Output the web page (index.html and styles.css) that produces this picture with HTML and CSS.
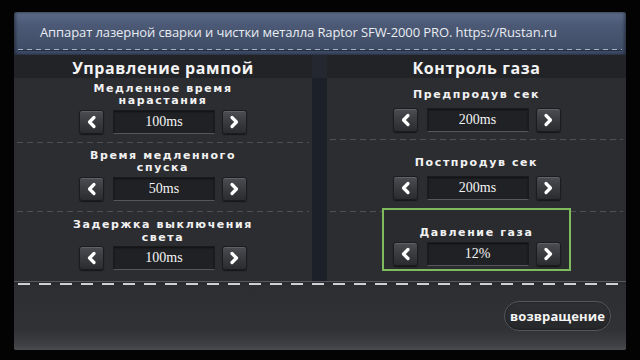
FILE: index.html
```html
<!DOCTYPE html>
<html lang="ru">
<head>
<meta charset="utf-8">
<title>Raptor SFW-2000 PRO</title>
<link rel="stylesheet" href="styles.css">
</head>
<body>
<div class="screen">
  <header class="header">
    <div class="header-title">Аппарат лазерной сварки и чистки металла Raptor SFW-2000 PRO. https://Rustan.ru</div>
    <div class="header-stitch"></div>
  </header>
  <main class="main">
    <section class="col col-left">
      <h2 class="col-title">Управление рампой</h2>
      <div class="panel">
        <div class="item">
          <div class="label">Медленное время<br>нарастания</div>
          <div class="spinner">
            <button class="btn"><svg width="11" height="14" viewBox="0 0 11 14"><polyline points="8,2.5 3.5,7 8,11.5" fill="none" stroke="#fff" stroke-width="3.2" stroke-linecap="round" stroke-linejoin="round"/></svg></button>
            <div class="value">100ms</div>
            <button class="btn"><svg width="11" height="14" viewBox="0 0 11 14"><polyline points="3,2.5 7.5,7 3,11.5" fill="none" stroke="#fff" stroke-width="3.2" stroke-linecap="round" stroke-linejoin="round"/></svg></button>
          </div>
        </div>
        <div class="sep"></div>
        <div class="item">
          <div class="label">Время медленного<br>спуска</div>
          <div class="spinner">
            <button class="btn"><svg width="11" height="14" viewBox="0 0 11 14"><polyline points="8,2.5 3.5,7 8,11.5" fill="none" stroke="#fff" stroke-width="3.2" stroke-linecap="round" stroke-linejoin="round"/></svg></button>
            <div class="value">50ms</div>
            <button class="btn"><svg width="11" height="14" viewBox="0 0 11 14"><polyline points="3,2.5 7.5,7 3,11.5" fill="none" stroke="#fff" stroke-width="3.2" stroke-linecap="round" stroke-linejoin="round"/></svg></button>
          </div>
        </div>
        <div class="sep"></div>
        <div class="item">
          <div class="label">Задержка выключения<br>света</div>
          <div class="spinner">
            <button class="btn"><svg width="11" height="14" viewBox="0 0 11 14"><polyline points="8,2.5 3.5,7 8,11.5" fill="none" stroke="#fff" stroke-width="3.2" stroke-linecap="round" stroke-linejoin="round"/></svg></button>
            <div class="value">100ms</div>
            <button class="btn"><svg width="11" height="14" viewBox="0 0 11 14"><polyline points="3,2.5 7.5,7 3,11.5" fill="none" stroke="#fff" stroke-width="3.2" stroke-linecap="round" stroke-linejoin="round"/></svg></button>
          </div>
        </div>
      </div>
    </section>
    <div class="divider"></div>
    <section class="col col-right">
      <h2 class="col-title">Контроль газа</h2>
      <div class="panel">
        <div class="item">
          <div class="label">Предпродув сек</div>
          <div class="spinner">
            <button class="btn"><svg width="11" height="14" viewBox="0 0 11 14"><polyline points="8,2.5 3.5,7 8,11.5" fill="none" stroke="#fff" stroke-width="3.2" stroke-linecap="round" stroke-linejoin="round"/></svg></button>
            <div class="value">200ms</div>
            <button class="btn"><svg width="11" height="14" viewBox="0 0 11 14"><polyline points="3,2.5 7.5,7 3,11.5" fill="none" stroke="#fff" stroke-width="3.2" stroke-linecap="round" stroke-linejoin="round"/></svg></button>
          </div>
        </div>
        <div class="sep"></div>
        <div class="item">
          <div class="label">Постпродув сек</div>
          <div class="spinner">
            <button class="btn"><svg width="11" height="14" viewBox="0 0 11 14"><polyline points="8,2.5 3.5,7 8,11.5" fill="none" stroke="#fff" stroke-width="3.2" stroke-linecap="round" stroke-linejoin="round"/></svg></button>
            <div class="value">200ms</div>
            <button class="btn"><svg width="11" height="14" viewBox="0 0 11 14"><polyline points="3,2.5 7.5,7 3,11.5" fill="none" stroke="#fff" stroke-width="3.2" stroke-linecap="round" stroke-linejoin="round"/></svg></button>
          </div>
        </div>
        <div class="sep"></div>
        <div class="item item-focus">
          <div class="focus-box">
            <div class="label">Давление газа</div>
            <div class="spinner">
              <button class="btn"><svg width="11" height="14" viewBox="0 0 11 14"><polyline points="8,2.5 3.5,7 8,11.5" fill="none" stroke="#fff" stroke-width="3.2" stroke-linecap="round" stroke-linejoin="round"/></svg></button>
              <div class="value">12%</div>
              <button class="btn"><svg width="11" height="14" viewBox="0 0 11 14"><polyline points="3,2.5 7.5,7 3,11.5" fill="none" stroke="#fff" stroke-width="3.2" stroke-linecap="round" stroke-linejoin="round"/></svg></button>
            </div>
          </div>
        </div>
      </div>
    </section>
  </main>
  <div class="bottom-stitch"></div>
  <footer class="footer">
    <button class="back">возвращение</button>
  </footer>
</div>
</body>
</html>
```

FILE: styles.css
```css
html, body {
  margin: 0;
  padding: 0;
  background: #030303;
  width: 640px;
  height: 360px;
  overflow: hidden;
}

.screen {
  margin: 12px 14px 0 14px;
  width: 612px;
  height: 338px;
  display: flex;
  flex-direction: column;
  background: #2c2d31;
  border-radius: 3px 3px 2px 2px;
  overflow: hidden;
}

.header {
  height: 43px;
  flex: none;
  display: flex;
  flex-direction: column;
  background: linear-gradient(180deg, #5c6b87 0%, #4b5976 30%, #425069 75%, #3b4761 100%);
  box-shadow: inset 2px 0 3px rgba(0,0,0,0.35), inset -2px 0 3px rgba(0,0,0,0.35);
}

.header-title {
  height: 36px;
  flex: none;
  padding-left: 26px;
  display: flex;
  align-items: center;
  padding-top: 4px;
  box-sizing: border-box;
  font-family: "Open Sans", "DejaVu Sans", sans-serif;
  font-size: 13px;
  letter-spacing: -0.1px;
  color: #e9ecf1;
  white-space: nowrap;
}

.header-stitch {
  height: 1px;
  margin: 1px 4px 0 4px;
  background: repeating-linear-gradient(90deg, #a7b2c6 0 5px, transparent 5px 9px);
  box-shadow: 0 1px 0 rgba(20,26,40,0.6);
}

.main {
  height: 226px;
  flex: none;
  display: flex;
}

.col {
  display: flex;
  flex-direction: column;
}

.col-left { width: 298px; }
.col-right { width: 299px; }

.divider {
  width: 15px;
  background: linear-gradient(180deg, #24272f 0 23px, #1b2029 23px 100%);
}

.col-title {
  margin: 0;
  height: 23px;
  flex: none;
  display: flex;
  align-items: center;
  justify-content: center;
  background: #222327;
  font-family: "Open Sans", "DejaVu Sans", sans-serif;
  font-weight: 700;
  font-size: 16px;
  letter-spacing: 0.6px;
  color: #f4f4f4;
  padding-top: 2px;
  box-sizing: border-box;
}

.panel {
  flex: 1;
  display: flex;
  flex-direction: column;
  background: #2c2d31;
}

.item {
  display: flex;
  flex-direction: column;
  align-items: center;
  justify-content: center;
  gap: 2px;
  padding-bottom: 4px;
  box-sizing: border-box;
}

.col-left .item:nth-child(1) { height: 64px; }
.col-left .item:nth-child(3) { height: 68px; }
.col-left .item:nth-child(5) { flex: 1; }

.col-right .item:nth-child(1) { height: 61px; padding: 4px 0 0 0; }
.col-right .item:nth-child(3) { height: 71px; padding: 6px 0 0 0; }
.col-right .item:nth-child(5) { flex: 1; }

.label {
  font-family: "DejaVu Sans", sans-serif;
  font-weight: 700;
  font-size: 11px;
  line-height: 12.5px;
  letter-spacing: 1.6px;
  color: #f2f2f2;
  text-align: center;
}

.col-right .label { margin-bottom: 4px; }

.sep {
  height: 1px;
  flex: none;
  margin: 0 3px;
  background: repeating-linear-gradient(90deg, #4d4f54 0 6px, transparent 6px 10px);
}

.item-focus {
  padding: 0;
  justify-content: flex-start;
}

.col-right .item-focus { padding: 0; }

.focus-box {
  margin-top: -4px;
  width: 189px;
  height: 63px;
  box-sizing: border-box;
  border: 2px solid #7dbb5e;
  background: #2a2b2f;
  display: flex;
  flex-direction: column;
  align-items: center;
  justify-content: flex-end;
  padding-bottom: 3px;
}

.col-right .focus-box .label { margin-bottom: 3px; }

.spinner {
  display: flex;
  align-items: center;
}

.btn {
  width: 25px;
  height: 24px;
  padding: 0;
  margin: 0;
  border: 1px solid #1b1c1e;
  border-radius: 3px;
  background: linear-gradient(180deg, #4c4d52 0%, #3a3b3f 50%, #2b2c2f 100%);
  box-shadow: inset 0 1px 0 rgba(255,255,255,0.12), 0 1px 1px rgba(0,0,0,0.5);
  display: flex;
  align-items: center;
  justify-content: center;
}

.value {
  width: 102px;
  height: 24px;
  margin: 0 7px 0 9px;
  box-sizing: border-box;
  background: #202124;
  border: 1px solid #1a1b1d;
  border-bottom: 1px solid #56575c;
  box-shadow: inset 0 1px 2px rgba(0,0,0,0.5);
  display: flex;
  align-items: center;
  justify-content: center;
  font-family: "Liberation Serif", "DejaVu Serif", serif;
  font-size: 14px;
  color: #f4f4f4;
}

.bottom-stitch {
  height: 4px;
  flex: none;
  border-top: 1px solid #55575c;
  box-sizing: border-box;
  background:
    repeating-linear-gradient(90deg, transparent 0 4px, #cfd0d3 4px 16px, transparent 16px 21px) 0 1px / 100% 2px no-repeat,
    #2a2b2e;
}

.footer {
  flex: 1;
  display: flex;
  justify-content: flex-end;
  align-items: flex-start;
  padding: 16px 15px 0 0;
  background: linear-gradient(180deg, #2d2e32 0%, #313236 70%, #3f4044 92%, #4a4b4f 100%);
}

.back {
  height: 30px;
  padding: 0 5px;
  border-radius: 15px;
  border: 1px solid #55565b;
  background: linear-gradient(180deg, #2f3034 0%, #262729 100%);
  box-shadow: inset 0 0 2px rgba(0,0,0,0.6);
  font-family: "Open Sans", "DejaVu Sans", sans-serif;
  font-weight: 700;
  font-size: 13px;
  letter-spacing: 0.1px;
  color: #f5f5f5;
}
```
